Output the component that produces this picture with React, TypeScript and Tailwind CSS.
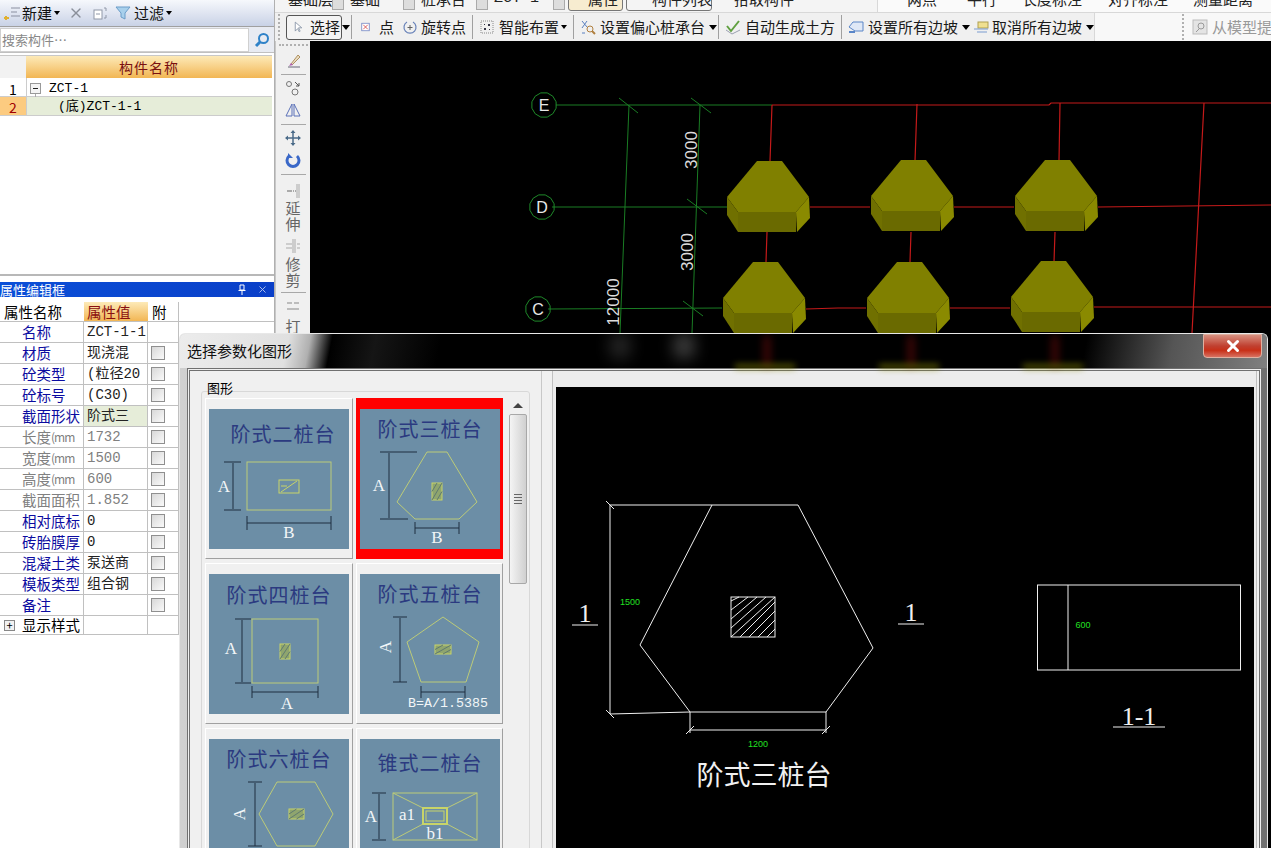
import React from "react";
import { X } from "lucide-react";

const mono = "font-['Liberation_Mono','Noto_Sans_CJK_SC',monospace]";
const CJK = "Noto Sans CJK SC, sans-serif";
const SERIF = "Liberation Serif, Noto Sans CJK SC, serif";

const props = [
  { name: "名称", value: "ZCT-1-1", kind: "blue", noCheck: true },
  { name: "材质", value: "现浇混", kind: "blue" },
  { name: "砼类型", value: "(粒径20", kind: "blue" },
  { name: "砼标号", value: "(C30)", kind: "blue" },
  { name: "截面形状", value: "阶式三", kind: "blue", active: true },
  { name: "长度", unit: "(mm", value: "1732", kind: "gray" },
  { name: "宽度", unit: "(mm", value: "1500", kind: "gray" },
  { name: "高度", unit: "(mm", value: "600", kind: "gray" },
  { name: "截面面积", value: "1.852", kind: "gray" },
  { name: "相对底标", value: "0", kind: "blue" },
  { name: "砖胎膜厚", value: "0", kind: "blue" },
  { name: "混凝土类", value: "泵送商", kind: "blue" },
  { name: "模板类型", value: "组合钢", kind: "blue" },
  { name: "备注", value: "", kind: "blue" },
];

function Arrow({ className = "" }: { className?: string }) {
  return <span className={`inline-block w-0 h-0 border-x-[3px] border-x-transparent border-t-[4px] border-t-black ${className}`} />;
}

function BigArrow({ className = "" }: { className?: string }) {
  return <span className={`inline-block w-0 h-0 border-x-[4px] border-x-transparent border-t-[5px] border-t-black ${className}`} />;
}

function Sep() {
  return <span className="w-px h-[24px] bg-[#a0a0a0] mx-[6px]" />;
}

function Gripper({ className = "" }: { className?: string }) {
  return <span className={`w-[2px] h-[26px] border-l-2 border-dotted border-[#b0b0b0] ${className}`} />;
}

function Icon({ children, w = 16 }: { children: React.ReactNode; w?: number }) {
  return (
    <svg width={w} height="16" viewBox="0 0 16 16" fill="none" className="shrink-0">
      {children}
    </svg>
  );
}

function LeftToolbar() {
  return (
    <div className="h-[27px] flex items-center pl-[3px] text-[15px] text-[#111] bg-[linear-gradient(#f6f8fc,#c9d2e6)] border-b border-[#a0a0a0]">
      <Icon w={18}>
        <path d="M7 3h9M7 7h6M7 11h9" stroke="#8a8fa0" />
        <path d="M2 11v4M0 13h5" stroke="#e0b030" strokeWidth="2" />
      </Icon>
      <span className="ml-[1px]">新建</span>
      <Arrow className="ml-[2px]" />
      <X size={16} className="ml-[8px] text-[#8a8f9a]" strokeWidth={2} />
      <span className="ml-[8px]">
        <Icon>
          <rect x="2" y="5" width="8" height="9" fill="#fff" stroke="#9098a8" />
          <path d="M4 9h4M12 3h2v3M14 10v3h-2" stroke="#9098a8" />
        </Icon>
      </span>
      <span className="ml-[7px]">
        <Icon>
          <path d="M1 2h14L10 8v6l-4-2V8z" fill="#a8d0ec" stroke="#6a9cc8" />
        </Icon>
      </span>
      <span className="ml-[3px]">过滤</span>
      <Arrow className="ml-[2px]" />
    </div>
  );
}

function SearchBox() {
  return (
    <div className="h-[26px] flex items-center bg-[#e8ebf2] border-b border-[#c0c0c0]">
      <div className="w-[249px] h-[24px] bg-white border border-[#d0d0d0] flex items-center pl-[1px] text-[13px] text-[#888]">搜索构件…</div>
      <span className="ml-[5px]">
        <Icon>
          <circle cx="9.5" cy="6.5" r="4.5" stroke="#2f82c8" strokeWidth="2" />
          <path d="M6 10l-4 4" stroke="#2f82c8" strokeWidth="3" />
        </Icon>
      </span>
    </div>
  );
}

function TreeGrid() {
  return (
    <div className="mt-[2px] mr-[2px] border-t border-[#c8c8c8] text-[14px]">
      <div className="flex h-[22px]">
        <div className="w-[26px] bg-[#f2f2f2]" />
        <div className="flex-1 flex items-center justify-center text-[#7a1010] bg-[linear-gradient(#fdeab8,#f2b654)] tracking-[1px]">构件名称</div>
      </div>
      <div className="flex h-[19px] border-b border-[#ccc]">
        <div className="w-[26px] flex items-center justify-center bg-white pt-[4px]">1</div>
        <div className={`flex-1 flex items-center pl-[3px] pt-[4px] border-l border-[#ccc] ${mono} text-[13px]`}>
          <svg width="12" height="12" viewBox="0 0 12 12" className="shrink-0 overflow-visible">
            <rect x="0.5" y="0.5" width="10" height="10" fill="#f4f4f4" stroke="#999" />
            <path d="M3 5.5h5" stroke="#222" />
            <path d="M5.5 11v9h16" stroke="#aaa" fill="none" />
          </svg>
          <span className="ml-[7px]">ZCT-1</span>
        </div>
      </div>
      <div className="flex h-[19px] border-b border-[#ccc]">
        <div className="w-[26px] flex items-center justify-center bg-[#fccb80] text-[#a00000] pt-[2px]">2</div>
        <div className={`flex-1 flex items-center pl-[31px] pt-[2px] bg-[#e6edd9] border-l border-[#ccc] ${mono} text-[13px]`}>(底)ZCT-1-1</div>
      </div>
    </div>
  );
}

function Check() {
  return <span className="w-[14px] h-[14px] border border-[#8f8f8f] bg-[linear-gradient(135deg,#d8d8d8,#fafafa)]" />;
}

function PropertyPanel() {
  return (
    <div className="text-[14.5px]">
      <div className="h-[15px] flex items-center bg-[linear-gradient(90deg,#0a4fd8,#0a3fc8)] text-white text-[13px] leading-none pr-[6px]">
        <span className="flex-1 whitespace-nowrap">属性编辑框</span>
        <svg width="10" height="11" viewBox="0 0 10 11" className="mr-[10px]">
          <path d="M3 1h4v5H3zM1.5 6.5h7M5 7v4" stroke="#fff" fill="none" />
        </svg>
        <X size={11} className="text-[#b8c8ec]" />
      </div>
      <div className="mt-[5px] flex h-[20px] border-b border-[#c0c0c0] items-center">
        <div className="w-[84px] pl-[4px]">属性名称</div>
        <div className="w-[64px] h-full flex items-center pl-[3px] text-[#8a1010] bg-[linear-gradient(#fdeab8,#f2b654)]">属性值</div>
        <div className="w-[31px] h-full pl-[4px] border-r border-[#c0c0c0] flex items-center">附</div>
      </div>
      {props.map((p) => (
        <div key={p.name} className="flex h-[21px] w-[179px] border-b border-[#c0c0c0]">
          <div className={`w-[84px] pl-[22px] border-r border-[#c0c0c0] flex items-center whitespace-nowrap ${p.kind === "blue" ? "text-[#0b0ba0]" : "text-[#808080]"}`}>
            {p.name}
            {p.unit && <span className="text-[12px] tracking-[-1px]">{p.unit}</span>}
          </div>
          <div className={`w-[64px] pl-[3px] border-r border-[#c0c0c0] flex items-center whitespace-nowrap overflow-hidden ${mono} text-[14px] ${p.kind === "blue" ? "text-[#222]" : "text-[#808080]"} ${p.active ? "bg-[#e6edd9]" : ""}`}>{p.value}</div>
          <div className="flex-1 flex items-center pl-[3px] border-r border-[#c0c0c0]">{!p.noCheck && <Check />}</div>
        </div>
      ))}
      <div className="flex h-[19px] w-[179px] border-b border-[#c0c0c0]">
        <div className="w-[84px] pl-[4px] border-r border-[#c0c0c0] flex items-center whitespace-nowrap">
          <span className="w-[11px] h-[11px] border border-[#888] bg-[#f2f2f2] flex items-center justify-center text-[11px] leading-none mr-[7px]">+</span>显示样式
        </div>
        <div className="w-[64px] border-r border-[#c0c0c0]" />
        <div className="flex-1 border-r border-[#c0c0c0]" />
      </div>
    </div>
  );
}

function TopStrip() {
  return (
    <div className="h-[13px] overflow-hidden flex items-end bg-[#f4f4f4] border-b border-[#d8d8d8] text-[15px] text-[#222] whitespace-nowrap">
      <div className="h-[26px] flex items-center pl-[13px] w-[602px] shrink-0">
        <span className="w-[44px]">基础层</span>
        <span className="w-[12px] h-[22px] bg-[#ddd] border border-[#aaa]" />
        <span className="ml-[6px] w-[53px]">基础</span>
        <span className="w-[12px] h-[22px] bg-[#ddd] border border-[#aaa]" />
        <span className="ml-[6px] w-[55px]">桩承台</span>
        <span className="w-[12px] h-[22px] bg-[#ddd] border border-[#aaa]" />
        <span className={`ml-[6px] w-[59px] ${mono}`}>ZCT-1</span>
        <span className="w-[12px] h-[22px] bg-[#ddd] border border-[#aaa]" />
        <span className="ml-[3px] h-[24px] w-[55px] pl-[19px] border border-[#777] rounded-[3px] bg-[#f7ecd0]">属性</span>
        <span className="ml-[3px] h-[24px] w-[86px] pl-[25px] border border-[#777] rounded-[3px]">构件列表</span>
        <span className="ml-[5px] pl-[17px]">拾取构件</span>
      </div>
      <div className="h-[26px] flex items-center flex-1 bg-[#fafafa] border-l border-[#d8d8d8]">
        <span className="ml-[29px]">两点</span>
        <span className="ml-[30px]">平行</span>
        <span className="ml-[25px]">长度标注</span>
        <span className="ml-[26px]">对齐标注</span>
        <span className="ml-[25px]">测量距离</span>
      </div>
    </div>
  );
}

function MainToolbar() {
  return (
    <div className="h-[28px] flex bg-[#f8f8f8] text-[15px] text-[#1a1a1a] whitespace-nowrap">
      <div className="w-[820px] shrink-0 flex items-center pl-[3px] bg-[#f0f0f0] border-r border-[#d8d8d8]">
        <Gripper className="mr-[6px]" />
        <span className="w-[57px] h-[25px] flex items-center pl-[5px] gap-[5px] border border-[#555] rounded-[3px] bg-[#f4f4f4]">
          <Icon w={13}>
            <path d="M4 2v11l3-3 2 4 1-1-2-4h4z" fill="#fff" stroke="#7f8ca0" />
          </Icon>
          选择
        </span>
        <BigArrow className="mr-[-5px]" />
        <Sep />
        <span className="ml-[3px]">
          <Icon w={12}>
            <rect x="1" y="3" width="10" height="10" stroke="#6a7fc0" fill="#fff" />
            <path d="M3 5l6 6M9 5l-6 6" stroke="#d03030" />
          </Icon>
        </span>
        <span className="ml-[6px]">点</span>
        <span className="ml-[8px]">
          <Icon>
            <path d="M5 3a6 6 0 1 0 6 0" stroke="#6680b8" strokeWidth="1.2" />
            <path d="M8 6v5M5.5 8.5h5" stroke="#606060" />
          </Icon>
        </span>
        <span className="ml-[3px]">旋转点</span>
        <Sep />
        <Icon>
          <rect x="2" y="2" width="12" height="12" stroke="#888" strokeDasharray="1 1" />
          <path d="M5 5h1v1H5zM9 5h2v2H9zM5 9h2v2H5zM10 10h1v1h-1z" fill="#334" />
        </Icon>
        <span className="ml-[4px]">智能布置</span>
        <Arrow className="ml-[2px]" />
        <Sep />
        <Icon>
          <path d="M2 2l5 6M7 2L2 9M2 14h3" stroke="#5a80c0" />
          <circle cx="10" cy="10" r="3" stroke="#b08040" />
          <path d="M12 12l3 3" stroke="#b08040" strokeWidth="2" />
        </Icon>
        <span className="ml-[4px]">设置偏心桩承台</span>
        <BigArrow className="ml-[4px] mr-[-5px]" />
        <Sep />
        <Icon>
          <path d="M2 7l4 5 8-10" stroke="#60a040" strokeWidth="2" />
          <path d="M1 11l6 4 8-4" stroke="#9aa0b0" />
        </Icon>
        <span className="ml-[4px]">自动生成土方</span>
        <Sep />
        <Icon>
          <path d="M5 3h10v9H7L1 8z" fill="#dfe8f6" stroke="#5a86c8" />
          <path d="M1 13h6" stroke="#5a86c8" strokeWidth="2" />
        </Icon>
        <span className="ml-[4px]">设置所有边坡</span>
        <BigArrow className="ml-[4px]" />
        <span className="ml-[3px]">
          <Icon>
            <rect x="5" y="3" width="10" height="6" fill="#f0e090" stroke="#b0a050" />
            <path d="M1 10h14M4 13h10" stroke="#7a9cd0" />
          </Icon>
        </span>
        <span className="ml-[3px]">取消所有边坡</span>
        <BigArrow className="ml-[4px]" />
      </div>
      <div className="flex-1 flex items-center pl-[87px] text-[#999]">
        <Gripper className="mr-[8px]" />
        <Icon>
          <rect x="1" y="1" width="14" height="14" fill="#e4e4e4" stroke="#bbb" />
          <circle cx="9" cy="7" r="3" stroke="#999" />
          <path d="M7 10l-3 3" stroke="#999" />
        </Icon>
        <span className="ml-[4px]">从模型提取</span>
      </div>
    </div>
  );
}

function VSep() {
  return <span className="block w-[25px] h-px bg-[#a8a8a8]" />;
}

function SideToolbar() {
  return (
    <div className="w-[35px] shrink-0 bg-[#f0f0f0] border-l border-[#c8c8c8] flex flex-col items-center text-[15px] leading-[16px] text-[#666] overflow-hidden">
      <span className="w-[29px] mt-[3px] border-t-2 border-dotted border-[#b0b0b0]" />
      <span className="mt-[7px]">
        <Icon w={18}>
          <path d="M3 14h12" stroke="#667" />
          <path d="M6 11l7-9 2 2-8 8z" fill="#e8dcc0" stroke="#b09060" />
          <path d="M4 13l2-3 2 2z" fill="#b060b0" />
        </Icon>
      </span>
      <span className="mt-[5px]"><VSep /></span>
      <span className="mt-[5px]">
        <Icon>
          <circle cx="4" cy="4" r="2.5" stroke="#777" />
          <circle cx="10" cy="12" r="3" stroke="#777" />
          <path d="M10 2l4 4M14 3v3h-3" stroke="#555" />
        </Icon>
      </span>
      <span className="mt-[6px]">
        <Icon>
          <path d="M7 2v12H1zM9 2v12h6z" stroke="#5a70b8" />
        </Icon>
      </span>
      <span className="mt-[6px]"><VSep /></span>
      <span className="mt-[5px]">
        <Icon>
          <path d="M8 1v14M1 8h14" stroke="#4a6a88" strokeWidth="1.5" />
          <path d="M8 0l2.5 3h-5zM8 16l2.5-3h-5zM0 8l3-2.5v5zM16 8l-3-2.5v5z" fill="#4a6a88" />
        </Icon>
      </span>
      <span className="mt-[6px]">
        <Icon>
          <path d="M4 4a6 6 0 1 0 8 0" stroke="#3a68c8" strokeWidth="3" />
          <path d="M3 1v5h5" fill="#3a68c8" />
        </Icon>
      </span>
      <span className="mt-[6px]"><VSep /></span>
      <span className="mt-[8px]">
        <Icon>
          <path d="M12 1v14M14 1v14" stroke="#aaa" />
          <path d="M2 8h5M8 8h1M10 8h1" stroke="#aaa" strokeWidth="2" />
        </Icon>
      </span>
      <span className="mt-[1px]">延</span>
      <span>伸</span>
      <span className="mt-[6px]">
        <Icon>
          <path d="M8 1v14M10 1v14" stroke="#aaa" />
          <path d="M1 6h6M1 10h6M12 6h3M12 10h3" stroke="#aaa" />
        </Icon>
      </span>
      <span className="mt-[2px]">修</span>
      <span>剪</span>
      <span className="mt-[4px]"><VSep /></span>
      <span className="mt-[5px]">
        <Icon>
          <path d="M2 5h5M9 5h5M2 11h12" stroke="#aaa" strokeWidth="1.5" />
        </Icon>
      </span>
      <span className="mt-[4px]">打</span>
    </div>
  );
}

function PileCap({ x, y }: { x: number; y: number }) {
  return (
    <g transform={`translate(${x} ${y})`}>
      <polygon points="31,0 56,0 83,36 70,51 12,51 1,36" fill="#808000" />
      <polygon points="1,36 12,51 12,71 1,54" fill="#707000" />
      <polygon points="12,51 70,51 70,71 12,71" fill="#6a6a00" />
      <polygon points="70,51 83,36 84,57 71,71" fill="#8a8a00" />
    </g>
  );
}

function Axis({ x, y, t }: { x: number; y: number; t: string }) {
  const pts = Array.from({ length: 12 }, (_, i) => {
    const a = (i * Math.PI) / 6 + Math.PI / 12;
    return `${(x + 12.5 * Math.cos(a)).toFixed(1)},${(y + 12.5 * Math.sin(a)).toFixed(1)}`;
  }).join(" ");
  return (
    <g>
      <polygon points={pts} fill="none" stroke="#1f8a2a" />
      <text x={x} y={y + 6} textAnchor="middle" fontSize="16" fill="#e8e8e8" fontFamily="Liberation Sans, sans-serif">{t}</text>
    </g>
  );
}

function DimText({ x, y, t }: { x: number; y: number; t: string }) {
  return (
    <text transform={`rotate(-90 ${x} ${y})`} x={x} y={y} textAnchor="middle" fontSize="17" fill="#dcdcdc" fontFamily="Liberation Sans, sans-serif">{t}</text>
  );
}

function Canvas() {
  const g = "#1a7d24";
  const r = "#c41a1a";
  return (
    <svg width="961" height="807" viewBox="310 41 961 807" className="block bg-black">
      <g stroke={g} fill="none">
        <path d="M556 105H772M552 207H727M548 309L722 308" />
        <path d="M629 105L620 333M700 105L692 333" />
        <path d="M619 98L638 113M691 98L711 113M687 199L707 214M683 301L703 316" />
      </g>
      <g stroke={r} fill="none" strokeWidth="1.2">
        <path d="M772 105H1049L1051 103H1271" />
        <path d="M772 105L770 161M917 104L915 161M1060 103L1059 161M1204 103L1192 333" />
        <path d="M810 207H870M954 207H1014M1098 207L1271 205" />
        <path d="M767 232L766 262M911 232L910 262M1055 232L1054 262" />
        <path d="M806 309L838 308H866M950 308H1010M1094 307H1271" />
      </g>
      <PileCap x={726} y={161} />
      <PileCap x={870} y={160} />
      <PileCap x={1014} y={160} />
      <PileCap x={722} y={262} />
      <PileCap x={866} y={262} />
      <PileCap x={1010} y={261} />
      <Axis x={544} y={105} t="E" />
      <Axis x={542} y={207} t="D" />
      <Axis x={538} y={309} t="C" />
      <DimText x={697} y={150} t="3000" />
      <DimText x={693} y={252} t="3000" />
      <DimText x={619} y={302} t="12000" />
    </svg>
  );
}

function Dim({ d }: { d: string }) {
  return <path d={d} stroke="#1f2f40" fill="none" />;
}

function Title({ t, x, y }: { t: string; x: number; y: number }) {
  return <text x={x} y={y} textAnchor="middle" fontSize="20" fill="#2b3a80" fontFamily={CJK} letterSpacing="1">{t}</text>;
}

function Lbl({ t, x, y, r, size = 17 }: { t: string; x: number; y: number; r?: boolean; size?: number }) {
  return (
    <text x={x} y={y} transform={r ? `rotate(-90 ${x} ${y})` : undefined} textAnchor="middle" fontSize={size} fill="#f2f6f8" fontFamily={SERIF}>{t}</text>
  );
}

function Hatch({ x, y, w, h }: { x: number; y: number; w: number; h: number }) {
  return (
    <g>
      <rect x={x} y={y} width={w} height={h} fill="#8fa56e" stroke="#c8d468" />
      <path d={`M${x} ${y + h}L${x + w} ${y}M${x} ${y + h / 2}L${x + w / 2} ${y}M${x + w / 2} ${y + h}L${x + w} ${y + h / 2}`} stroke="#5f7a70" />
    </g>
  );
}

const line = "#bccb78";

const thumbs: { id: string; selected?: boolean; body: React.ReactNode }[] = [
  {
    id: "2",
    body: (
      <>
        <Title t="阶式二桩台" x={74} y={33} />
        <rect x="38" y="53" width="84" height="48" fill="none" stroke={line} />
        <rect x="70" y="71" width="20" height="13" fill="none" stroke="#c8d468" />
        <path d="M72 83L88 72M72 77h6" stroke="#c8d468" />
        <Dim d="M24 54V100M15 53H32M15 101H32M38 114H122M38 107V121M122 107V121" />
        <Lbl t="A" x={15} y={83} />
        <Lbl t="B" x={80} y={129} />
      </>
    ),
  },
  {
    id: "3",
    selected: true,
    body: (
      <>
        <Title t="阶式三桩台" x={70} y={28} />
        <polygon points="67,43 87,43 117,93 99,110 55,110 37,93" fill="none" stroke={line} />
        <Hatch x={72} y={74} w={10} h={17} />
        <Dim d="M29 44V109M20 43H57M20 110H48M55 119H99M55 113V125M99 113V125" />
        <Lbl t="A" x={19} y={82} />
        <Lbl t="B" x={77} y={134} />
      </>
    ),
  },
  {
    id: "4",
    body: (
      <>
        <Title t="阶式四桩台" x={70} y={29} />
        <rect x="43" y="45" width="66" height="64" fill="none" stroke={line} />
        <Hatch x={71} y={70} w={10} h={15} />
        <Dim d="M33 46V108M26 45H42M26 109H42M43 118H109M43 112V124M109 112V124" />
        <Lbl t="A" x={22} y={80} />
        <Lbl t="A" x={78} y={135} />
      </>
    ),
  },
  {
    id: "5",
    body: (
      <>
        <Title t="阶式五桩台" x={70} y={28} />
        <polygon points="83,43 119,68 106,108 61,108 47,68" fill="none" stroke={line} />
        <Hatch x={75} y={71} w={16} h={9} />
        <Dim d="M40 44V108M33 43H47M33 108H47M61 118H105M61 112V124M105 112V124" />
        <Lbl t="A" x={31} y={73} r />
        <text x="88" y="133" textAnchor="middle" fontSize="13.3" fill="#f2f6f8" fontFamily="Liberation Mono, monospace">B=A/1.5385</text>
      </>
    ),
  },
  {
    id: "6",
    body: (
      <>
        <Title t="阶式六桩台" x={70} y={28} />
        <polygon points="68,43 106,43 124,75 106,107 68,107 50,75" fill="none" stroke={line} />
        <Hatch x={80} y={70} w={15} h={10} />
        <Dim d="M46 44V107M39 43H53M39 107H53" />
        <Lbl t="A" x={36} y={75} r />
      </>
    ),
  },
  {
    id: "7",
    body: (
      <>
        <Title t="锥式二桩台" x={70} y={32} />
        <rect x="33" y="54" width="84" height="47" fill="none" stroke={line} />
        <path d="M33 54L63 69M117 54L87 69M33 101L63 85M117 101L87 85" stroke={line} />
        <rect x="63" y="69" width="24" height="16" fill="none" stroke="#c8d468" strokeWidth="2" />
        <rect x="66" y="72" width="18" height="10" fill="none" stroke="#c8d468" />
        <Dim d="M19 55V100M12 54H26M12 101H26" />
        <Lbl t="A" x={11} y={83} />
        <Lbl t="a1" x={47} y={81} />
        <Lbl t="b1" x={75} y={100} />
      </>
    ),
  },
];

function Thumb({ selected, children }: { selected?: boolean; children: React.ReactNode }) {
  return (
    <div className={`h-[161px] ${selected ? "pt-[11px] pl-[4px] bg-[#ff0000]" : "pt-[10px] pl-[3px] bg-[#f0f0f0] border border-t-white border-l-white border-r-[#a0a0a0] border-b-[#a0a0a0]"}`}>
      <svg width="140" height="140" viewBox="0 0 140 140" className="block bg-[#6c8ea6]">
        {children}
      </svg>
    </div>
  );
}

function Scrollbar() {
  return (
    <div className="ml-[6px] w-[18px] flex flex-col items-center">
      <span className="mt-[5px] w-0 h-0 border-x-[5px] border-x-transparent border-b-[5px] border-b-[#444]" />
      <div className="mt-[6px] w-[18px] h-[170px] border border-[#a8a8a8] rounded-[2px] bg-[linear-gradient(90deg,#f4f4f4,#d0d0d0)] flex flex-col items-center justify-center gap-[2px]">
        <span className="w-[8px] h-px bg-[#666]" />
        <span className="w-[8px] h-px bg-[#666]" />
        <span className="w-[8px] h-px bg-[#666]" />
        <span className="w-[8px] h-px bg-[#666]" />
      </div>
    </div>
  );
}

function Preview() {
  const w = "#f0f0f0";
  const hatch = [];
  for (let i = -36; i < 44; i += 9) {
    const x0 = Math.max(731, 731 + i);
    const y0 = i < 0 ? 637 + i : 637;
    const x1 = Math.min(775, 775 + i);
    const y1 = i > 4 ? 597 + (i - 4) : 597;
    hatch.push(<path key={i} d={`M${x0} ${y0}L${x1} ${y1}`} stroke={w} />);
  }
  return (
    <svg width="698" height="461" viewBox="556 387 698 461" className="block bg-black">
      <path d="M610 505H798L873 648L826 712H690L640 645L712 505" fill="none" stroke={w} />
      <path d="M610 505V714M610 714L690 712M606 501L614 509M606 710L614 718" fill="none" stroke={w} />
      <path d="M690 712V733M826 712V733M690 730H826M686 734L694 726M822 734L830 726" fill="none" stroke={w} />
      <rect x="731" y="597" width="44" height="40" fill="none" stroke={w} />
      {hatch}
      <text x="585" y="622" textAnchor="middle" fontSize="26" fill={w} fontFamily={SERIF}>1</text>
      <path d="M572 625H598M898 624H924" stroke={w} />
      <text x="911" y="621" textAnchor="middle" fontSize="26" fill={w} fontFamily={SERIF}>1</text>
      <rect x="1037.5" y="585" width="203" height="85" fill="none" stroke={w} />
      <path d="M1068 585V670" stroke={w} />
      <text x="1139" y="725" textAnchor="middle" fontSize="26" fill={w} fontFamily={SERIF}>1-1</text>
      <path d="M1113 727H1165" stroke={w} />
      <text x="630" y="605" textAnchor="middle" fontSize="9" fill="#22e022" fontFamily="Liberation Sans, sans-serif">1500</text>
      <text x="1083" y="628" textAnchor="middle" fontSize="9" fill="#22e022" fontFamily="Liberation Sans, sans-serif">600</text>
      <text x="758" y="747" textAnchor="middle" fontSize="9" fill="#22e022" fontFamily="Liberation Sans, sans-serif">1200</text>
      <text x="764" y="785" textAnchor="middle" fontSize="27" fill={w} fontFamily={CJK}>阶式三桩台</text>
    </svg>
  );
}

function Dialog() {
  return (
    <div className="absolute left-[179px] top-[333px] w-[1089px] h-[515px] rounded-t-[6px] border-t border-x border-[#e8e8e8] overflow-hidden bg-[linear-gradient(90deg,#d0d0d0,#b0b0b0_50%,#707070)] flex flex-col">
      <div className="relative h-[34px] shrink-0 flex items-center pl-[7px] text-[15px] text-[#111] bg-[linear-gradient(101deg,#ececec,#e0e0e0_10%,#b0b0b0_12%,#000_14%,#151515_18%,#000_24%,#000_83%,#555_91%,#808080_100%)]">
        选择参数化图形
        <span className="absolute left-[430px] top-0 w-[20px] h-[24px] bg-[#808080] blur-[8px] opacity-30" />
        <span className="absolute left-[494px] top-0 w-[20px] h-[24px] bg-[#a0a0a0] blur-[8px] opacity-40" />
        <span className="absolute left-[584px] top-[2px] w-[6px] h-[30px] bg-[#801010] blur-[4px] opacity-60" />
        <span className="absolute left-[728px] top-[2px] w-[6px] h-[30px] bg-[#801010] blur-[4px] opacity-60" />
        <span className="absolute left-[872px] top-[2px] w-[6px] h-[30px] bg-[#801010] blur-[4px] opacity-60" />
        <span className="absolute left-[555px] top-[30px] w-[60px] h-[5px] bg-[#8a8a00] blur-[3px] opacity-60" />
        <span className="absolute left-[699px] top-[30px] w-[60px] h-[5px] bg-[#8a8a00] blur-[3px] opacity-60" />
        <span className="absolute left-[843px] top-[30px] w-[60px] h-[5px] bg-[#8a8a00] blur-[3px] opacity-60" />
        <span className="absolute right-[5px] top-0 w-[59px] h-[24px] rounded-b-[4px] border border-[#e0b0a0] flex items-center justify-center bg-[linear-gradient(#d89080,#c04030_50%,#c83018_70%,#d87060)]">
          <X size={18} strokeWidth={4} className="text-white" />
        </span>
      </div>
      <div className="flex-1 ml-[7px] mr-[5px] border-[3px] border-double border-[#707070] border-b-0 bg-[#f0f0f0] flex overflow-hidden min-h-0">
        <div className="w-[352px] shrink-0 border-r border-[#c8c8c8] pl-[11px] pt-[9px]">
          <span className="block text-[13px] leading-[16px] ml-[5px] h-[11px] relative z-10 bg-[#f0f0f0] w-fit px-[1px]">图形</span>
          <div className="w-[329px] border border-[#d8d8d8] rounded-[3px] pl-[3px] pt-[6px] flex">
            <div className="grid grid-cols-[148px_147px] gap-x-[3px] gap-y-[4px] content-start h-[500px] overflow-hidden">
              {thumbs.map((t) => (
                <Thumb key={t.id} selected={t.selected}>{t.body}</Thumb>
              ))}
            </div>
            <Scrollbar />
          </div>
        </div>
        <div className="flex-1 pl-[10px] min-w-0">
          <div className="w-[705px] h-full bg-[#ececec] border-l border-r border-[#c0c0c0] pt-[16px] px-[3px]">
            <Preview />
          </div>
        </div>
      </div>
    </div>
  );
}

export default function App() {
  return (
    <div className="relative w-[1271px] h-[848px] overflow-hidden flex bg-white text-black font-['Noto_Sans_CJK_SC',sans-serif]">
      <div className="w-[275px] shrink-0 flex flex-col border-r border-[#b0b0b0]">
        <LeftToolbar />
        <SearchBox />
        <TreeGrid />
        <div className="flex-1 max-h-[160px] border-b-2 border-[#b8b8b8] h-[160px]" />
        <div className="mt-[6px]">
          <PropertyPanel />
        </div>
      </div>
      <div className="flex-1 flex flex-col min-w-0">
        <TopStrip />
        <MainToolbar />
        <div className="flex flex-1 min-h-0">
          <SideToolbar />
          <Canvas />
        </div>
      </div>
      <Dialog />
    </div>
  );
}
